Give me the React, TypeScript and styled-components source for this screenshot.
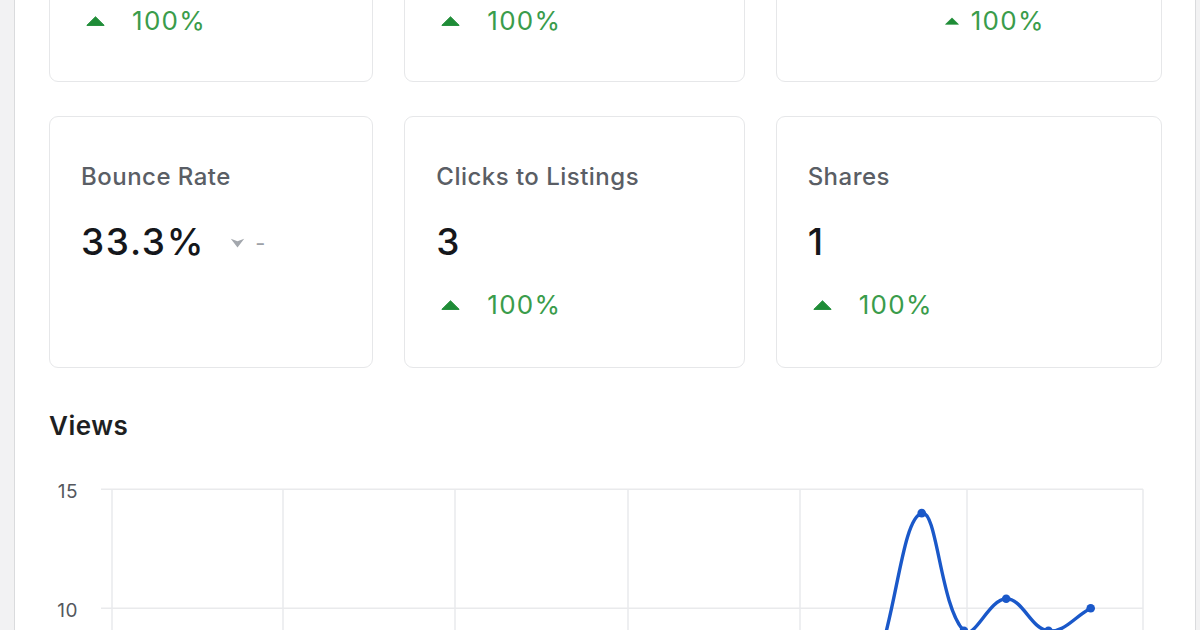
import React from "react";
import styled, { createGlobalStyle } from "styled-components";

const Global = createGlobalStyle`
  html, body { margin: 0; padding: 0; background: #f2f2f3; overflow: hidden; }
  body { font-family: Inter, "Liberation Sans", Arial, sans-serif; -webkit-font-smoothing: antialiased; }
  * { box-sizing: border-box; }
`;

const Page = styled.div`
  width: 1200px;
  height: 630px;
  overflow: hidden;
  padding: 0 4px 0 14px;
`;

const Panel = styled.main`
  background: #ffffff;
  border-left: 1px solid #dadbdd;
  border-right: 1px solid #dadbdd;
  min-height: 900px;
  padding: 0 33px 0 34px;
`;

const CardGrid = styled.section<{ $first?: boolean }>`
  display: grid;
  grid-template-columns: 324fr 340fr 386fr;
  column-gap: 31px;
  margin-top: ${(p) => (p.$first ? "-170px" : "34px")};
`;

const Card = styled.div<{ $clipped?: boolean }>`
  border: 1px solid #e6e7e9;
  border-radius: 9px;
  padding: ${(p) => (p.$clipped ? "175px 31px 45px" : "45px 31px 47px")};
  display: flex;
  flex-direction: column;
  height: 252px;
  background: #fff;
`;

const Title = styled.div`
  font-size: 24px;
  line-height: 30px;
  font-weight: 450;
  color: #5a5e65;
  letter-spacing: 0.02em;
`;

const ValueRow = styled.div`
  margin-top: 28px;
  display: flex;
  align-items: center;
  height: 44px;
`;

const Value = styled.div`
  font-size: 37px;
  line-height: 44px;
  font-weight: 500;
  color: #15171b;
  letter-spacing: 0.045em;
`;

const DeltaRow = styled.div<{ $offset?: number; $clipped?: boolean }>`
  margin-top: ${(p) => (p.$clipped ? 0 : 26)}px;
  display: flex;
  align-items: center;
  height: 30px;
  padding-left: ${(p) => p.$offset ?? 0}px;
`;

const DeltaText = styled.span`
  font-size: 26px;
  line-height: 30px;
  color: #3a9c4b;
  letter-spacing: 0.05em;
`;

const UpArrow = styled.svg<{ $small?: boolean }>`
  width: ${(p) => (p.$small ? 14 : 19)}px;
  height: ${(p) => (p.$small ? 8 : 10)}px;
  margin-left: 5px;
  margin-right: ${(p) => (p.$small ? 12 : 27)}px;
  flex: none;
`;

const Neutral = styled.span`
  display: flex;
  align-items: center;
  margin-left: 25px;
  color: #9da1a7;
  font-size: 22px;
  gap: 10px;
  margin-top: 2px;
`;

const DownArrow = styled.svg`
  width: 15px;
  height: 10px;
`;

const SectionTitle = styled.h2`
  margin: 43px 0 0;
  font-size: 26px;
  line-height: 30px;
  font-weight: 600;
  color: #1e1f22;
  letter-spacing: 0.02em;
`;

const ChartBox = styled.div`
  margin-top: 29px;
  height: 320px;
`;

const Up = ({ small }: { small?: boolean }) => (
  <UpArrow $small={small} viewBox="0 0 19 10">
    <path d="M9.5 0.8 L18.2 9.4 L0.8 9.4 Z" fill="#1f8c37" stroke="#1f8c37" strokeWidth="1" strokeLinejoin="round" />
  </UpArrow>
);

type Stat = {
  title?: string;
  value?: string;
  delta?: string;
  offset?: number;
  small?: boolean;
  neutral?: boolean;
};

/* first row is scrolled above the top edge: only its change line is in view */
const row1: Stat[] = [
  { delta: "100%" },
  { delta: "100%" },
  { delta: "100%", offset: 132, small: true },
];

const row2: Stat[] = [
  { title: "Bounce Rate", value: "33.3%", neutral: true },
  { title: "Clicks to Listings", value: "3", delta: "100%" },
  { title: "Shares", value: "1", delta: "100%" },
];

const StatCard = ({ s }: { s: Stat }) => {
  const clipped = !s.title;
  return (
    <Card $clipped={clipped}>
      {s.title && <Title>{s.title}</Title>}
      {s.value && (
        <ValueRow>
          <Value>{s.value}</Value>
          {s.neutral && (
            <Neutral>
              <DownArrow viewBox="0 0 15 10">
                <path d="M0.8 0.8 L7.5 3.2 L14.2 0.8 L7.5 9.4 Z" fill="#a3a7ad" />
              </DownArrow>
              <span>-</span>
            </Neutral>
          )}
        </ValueRow>
      )}
      {s.delta && (
        <DeltaRow $offset={s.offset} $clipped={clipped}>
          <Up small={s.small} />
          <DeltaText>{s.delta}</DeltaText>
        </DeltaRow>
      )}
    </Card>
  );
};

type Pt = { x: number; y: number };

function splinePath(pts: Pt[], t = 0.4) {
  const cps = pts.map((cur, i) => {
    const prev = pts[i - 1] || cur;
    const next = pts[i + 1] || cur;
    const d01 = Math.hypot(cur.x - prev.x, cur.y - prev.y);
    const d12 = Math.hypot(next.x - cur.x, next.y - cur.y);
    const tot = d01 + d12 || 1;
    const fa = (t * d01) / tot;
    const fb = (t * d12) / tot;
    return {
      p: { x: cur.x - fa * (next.x - prev.x), y: cur.y - fa * (next.y - prev.y) },
      n: { x: cur.x + fb * (next.x - prev.x), y: cur.y + fb * (next.y - prev.y) },
    };
  });
  let d = `M${pts[0].x},${pts[0].y}`;
  for (let i = 0; i < pts.length - 1; i++) {
    const a = cps[i].n;
    const b = cps[i + 1].p;
    const c = pts[i + 1];
    d += ` C${a.x.toFixed(1)},${a.y.toFixed(1)} ${b.x.toFixed(1)},${b.y.toFixed(1)} ${c.x.toFixed(1)},${c.y.toFixed(1)}`;
  }
  return d;
}

const values = [2, 0, 1, 3, 0, 2, 1, 0, 4, 2, 1, 3, 0, 2, 4, 1, 3, 3, 8, 14, 9.05, 10.4, 9.05, 10];
const yOf = (v: number) => 138.3 - (v - 10) * 23.8;
const lastX = 1041.7;
const step = 42.25;

const ViewsChart = () => {
  const pts: Pt[] = values.map((v, i) => ({ x: lastX - (values.length - 1 - i) * step, y: yOf(v) }));
  const vlines = [63, 234, 406, 579, 751, 918, 1094];
  const hlines = [15, 10, 5, 0];
  const labels = [15, 10];
  return (
    <svg width="100%" height="320" viewBox="0 0 1113 320">
      {hlines.map((v) => (
        <line key={v} x1={52} x2={1094} y1={yOf(v)} y2={yOf(v)} stroke="#e9eaec" strokeWidth="1.5" />
      ))}
      {vlines.map((x) => (
        <line key={x} x1={x} x2={x} y1={yOf(15)} y2={yOf(0) + 8} stroke="#e9eaec" strokeWidth="1.5" />
      ))}
      {labels.map((v) => (
        <text
          key={v}
          x={29}
          y={yOf(v) + 9}
          textAnchor="end"
          fontFamily="Inter, 'Liberation Sans', sans-serif"
          fontSize="19"
          letterSpacing="0.5"
          fill="#55585e"
        >
          {v}
        </text>
      ))}
      <path d={splinePath(pts)} fill="none" stroke="#1a58c9" strokeWidth="3.4" strokeLinecap="round" />
      {pts.map((p, i) => (
        <circle key={i} cx={p.x} cy={p.y} r="4.3" fill="#1a58c9" />
      ))}
    </svg>
  );
};

export default function App() {
  return (
    <Page>
      <Global />
      <Panel>
        <CardGrid $first>
          {row1.map((s, i) => (
            <StatCard key={i} s={s} />
          ))}
        </CardGrid>
        <CardGrid>
          {row2.map((s) => (
            <StatCard key={s.title} s={s} />
          ))}
        </CardGrid>
        <SectionTitle>Views</SectionTitle>
        <ChartBox>
          <ViewsChart />
        </ChartBox>
      </Panel>
    </Page>
  );
}
